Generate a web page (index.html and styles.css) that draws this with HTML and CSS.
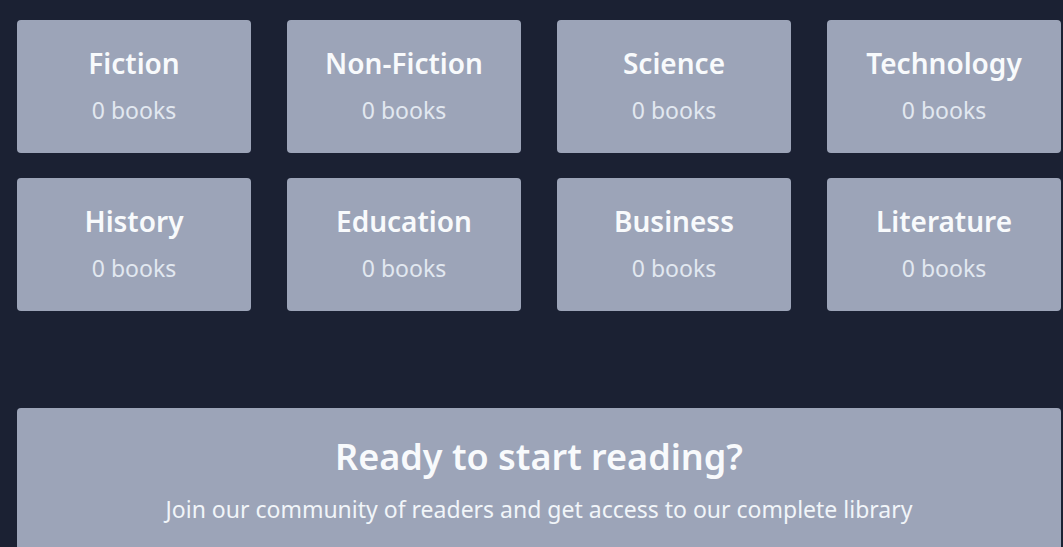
FILE: index.html
```html
<!DOCTYPE html>
<html>
<head>
<meta charset="utf-8">
<link rel="stylesheet" href="styles.css">
</head>
<body>
<main class="page">
  <section class="grid">
    <div class="card"><h3 class="card-title">Fiction</h3><p class="card-count">0 books</p></div>
    <div class="card"><h3 class="card-title">Non-Fiction</h3><p class="card-count">0 books</p></div>
    <div class="card"><h3 class="card-title">Science</h3><p class="card-count">0 books</p></div>
    <div class="card"><h3 class="card-title">Technology</h3><p class="card-count">0 books</p></div>
    <div class="card"><h3 class="card-title">History</h3><p class="card-count">0 books</p></div>
    <div class="card"><h3 class="card-title">Education</h3><p class="card-count">0 books</p></div>
    <div class="card"><h3 class="card-title">Business</h3><p class="card-count">0 books</p></div>
    <div class="card"><h3 class="card-title">Literature</h3><p class="card-count">0 books</p></div>
  </section>
  <section class="cta">
    <h2 class="cta-title">Ready to start reading?</h2>
    <p class="cta-text">Join our community of readers and get access to our complete library</p>
  </section>
</main>
</body>
</html>
```
FILE: styles.css
```css
html, body {
  margin: 0;
  padding: 0;
  background: #1b2133;
  overflow: hidden;
}
body {
  font-family: "Noto Sans", "Open Sans", sans-serif;
}
.page {
  padding: 20px 2px 0 17px;
}
.grid {
  display: grid;
  grid-template-columns: repeat(4, 234px);
  column-gap: 36px;
  row-gap: 25px;
}
.card {
  height: 133px;
  box-sizing: border-box;
  background: #9ca4b8;
  border-radius: 4px;
  display: flex;
  flex-direction: column;
  align-items: center;
  padding-top: 25px;
}
.card-title {
  margin: 0;
  font-size: 28px;
  font-weight: 600;
  line-height: 36px;
  color: #f8fafc;
}
.card-count {
  margin: 14px 0 0;
  font-size: 23px;
  line-height: 30px;
  color: #e2e8f0;
}
.cta {
  margin-top: 97px;
  width: 1044px;
  height: 200px;
  box-sizing: border-box;
  background: #9ca4b8;
  border-radius: 4px;
  display: flex;
  flex-direction: column;
  align-items: center;
  padding-top: 26px;
}
.cta-title {
  margin: 0;
  font-size: 36px;
  font-weight: 600;
  line-height: 46px;
  color: #f8fafc;
}
.cta-text {
  margin: 14px 0 0;
  font-size: 23px;
  line-height: 30px;
  color: #f1f5f9;
}
```
